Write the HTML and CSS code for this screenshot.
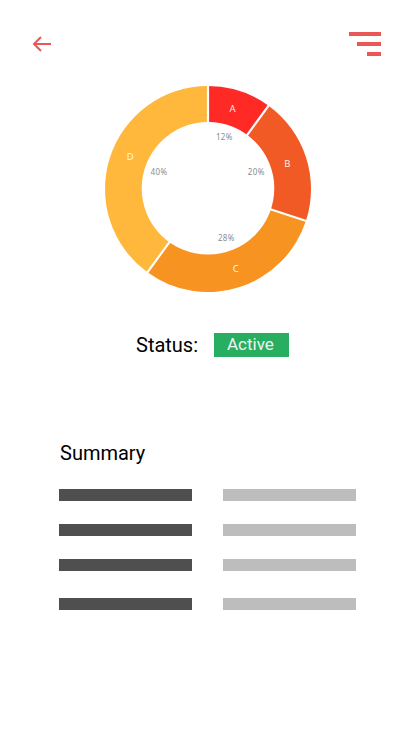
FILE: index.html
```html
<!DOCTYPE html>
<html lang="en">
<head>
<meta charset="utf-8">
<title>Status</title>
<link rel="stylesheet" href="styles.css">
</head>
<body>
<header class="topbar">
  <svg class="back" width="20" height="18" viewBox="0 0 20 18"><path d="M19 9H2M9 2L2 9l7 7"/></svg>
  <div class="menu"><span class="line"></span><span class="line mid"></span><span class="line short"></span></div>
</header>
<main>
  <svg class="chart" width="208" height="208" viewBox="-104 -104 208 208">
    <path fill="#ff2a26" d="M0-103A103 103 0 0 1 60.54-83.33L0 0Z"/>
    <path fill="#f15a24" d="M60.54-83.33A103 103 0 0 1 97.96 31.83L0 0Z"/>
    <path fill="#f79320" d="M97.96 31.83A103 103 0 0 1-60.54 83.33L0 0Z"/>
    <path fill="#ffb73c" d="M-60.54 83.33A103 103 0 0 1 0-103L0 0Z"/>
    <path class="gaps" d="M0-60V-104M35.27-48.54L61.7-84.95M57.06 18.54L99.86 32.45M-35.27 48.54L-61.7 84.95"/>
    <circle fill="#fff" cy="-.7" r="66.3"/>
    <g class="names">
      <text x="24.6" y="-77.4">A</text>
      <text x="79.3" y="-22.4">B</text>
      <text x="27.8" y="83">C</text>
      <text x="-77.7" y="-29">D</text>
    </g>
    <g class="values">
      <text x="16.4" y="-49">12%</text>
      <text x="48.2" y="-14">20%</text>
      <text x="18.4" y="52">28%</text>
      <text x="-49" y="-14">40%</text>
    </g>
  </svg>
  <div class="status">
    <span class="label">Status:</span>
    <span class="badge">Active</span>
  </div>
  <section class="summary">
    <h2>Summary</h2>
    <div class="row"><span class="key"></span><span class="val"></span></div>
    <div class="row"><span class="key"></span><span class="val"></span></div>
    <div class="row"><span class="key"></span><span class="val"></span></div>
    <div class="row last"><span class="key"></span><span class="val"></span></div>
  </section>
</main>
</body>
</html>
```
FILE: styles.css
```css
* {
  box-sizing: border-box;
}

body {
  margin: 0;
  min-height: 736px;
  background: #fff;
  color: #000;
  font-family: Roboto, sans-serif;
}

.topbar {
  display: flex;
  justify-content: space-between;
  height: 85px;
  padding: 32px 33px 0 32px;
}

.back {
  margin-top: 3px;
  fill: none;
  stroke: #eb5757;
  stroke-width: 2;
}

.menu {
  display: flex;
  flex-direction: column;
  align-items: flex-end;
  gap: 6px;
}

.line {
  width: 32px;
  height: 4px;
  background: #eb5757;
}

.line.mid {
  width: 24px;
}

.line.short {
  width: 14px;
}

.chart {
  display: block;
  margin-left: 104px;
}

.gaps {
  fill: none;
  stroke: #fff;
  stroke-width: 2.2;
}

.names,
.values {
  font-family: "Noto Sans", sans-serif;
  text-anchor: middle;
}

.names {
  fill: #fff;
  opacity: 0.9;
  font-size: 9.5px;
}

.values {
  fill: #808080;
  opacity: 0.9;
  font-size: 8px;
  letter-spacing: 0.4px;
}

.status {
  display: flex;
  align-items: center;
  height: 24px;
  margin: 40px 0 0 136px;
}

.label {
  width: 78px;
  font-size: 20px;
  line-height: 24px;
}

.badge {
  width: 75px;
  height: 24px;
  padding-left: 13px;
  background: #27ae60;
  color: #f2f2f2;
  font-size: 17px;
  line-height: 22px;
}

.summary {
  margin: 84px 0 0 59px;
}

.summary h2 {
  margin: 0 0 24px 1px;
  font-size: 20px;
  font-weight: 400;
  line-height: 24px;
}

.row {
  display: flex;
  gap: 31px;
  margin-bottom: 23px;
}

.row.last {
  margin-top: 27px;
}

.key,
.val {
  width: 133px;
  height: 12px;
  background: #4f4f4f;
}

.val {
  background: #bdbdbd;
}
```
